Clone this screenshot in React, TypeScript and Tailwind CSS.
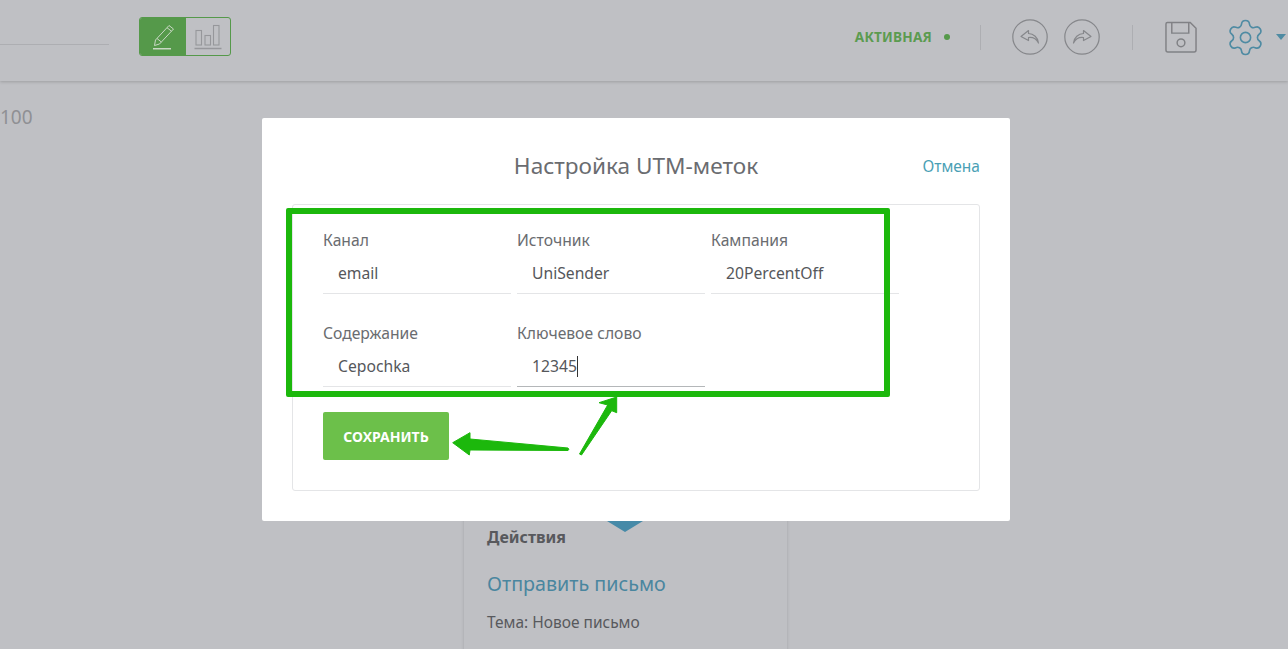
import { Settings } from 'lucide-react';

const fields = [
  { label: 'Канал', value: 'email' },
  { label: 'Источник', value: 'UniSender' },
  { label: 'Кампания', value: '20PercentOff' },
  { label: 'Содержание', value: 'Cepochka' },
  { label: 'Ключевое слово', value: '12345', active: true },
];

const Header = () => (
  <header className="h-[81px] flex items-center bg-[#bfc0c4] shadow-[0_1px_3px_rgba(0,0,0,0.18)] relative">
    <div className="w-[109px] h-[46px] border-b border-[#adaeb2] mt-[-1px] self-start" />
    <div className="ml-[30px] w-[92px] h-[39px] mt-[-8px] flex rounded-[3px] border border-[#55994a] overflow-hidden">
      <div className="w-[46px] bg-[#55994a] flex items-center justify-center">
        <svg width="22" height="26" viewBox="0 0 22 26" fill="none" stroke="#c9d8c4" strokeWidth="1">
          <path d="M3.5 16 L17 1.5 L21.5 5 L7.5 20 L2.5 21.5 Z" />
          <path d="M15 3.7 L19.5 7.2" />
          <path d="M5 14.5 L9.3 18" />
          <path d="M1 24.7 H19" strokeWidth="1.5" />
        </svg>
      </div>
      <div className="flex-1 flex items-center justify-center">
        <svg width="28" height="26" viewBox="0 0 28 26" fill="none" stroke="#96979b" strokeWidth="1.1">
          <rect x="2" y="6.5" width="5.5" height="14.5" />
          <rect x="11" y="11.5" width="5.5" height="9.5" />
          <rect x="19.5" y="1.5" width="5.5" height="19.5" />
          <path d="M0.5 24.5 H27.5" strokeWidth="1.5" />
        </svg>
      </div>
    </div>
    <div className="ml-auto mb-[7px] flex items-center">
      <span className="text-[13.6px] font-bold text-[#5b9b50] tracking-[0.2px]">АКТИВНАЯ</span>
      <span className="ml-[12px] w-[6px] h-[6px] rounded-full bg-[#55994a]" />
      <span className="ml-[30px] w-px h-[25px] bg-[#adaeb2]" />
      <svg className="ml-[31px]" width="36" height="36" viewBox="0 0 36 36" fill="none" stroke="#86878b" strokeWidth="1.2">
        <circle cx="18" cy="18" r="17.2" />
        <path d="M16.5 11.5 L9 17.5 L16.5 21.5 V18.5 C20.5 18 24.5 20 26.5 24 C26 18.5 21.5 14.5 16.5 14.5 Z" strokeLinejoin="round" />
      </svg>
      <svg className="ml-[16px]" width="36" height="36" viewBox="0 0 36 36" fill="none" stroke="#86878b" strokeWidth="1.2">
        <circle cx="18" cy="18" r="17.2" />
        <path d="M19.5 11.5 L27 17.5 L19.5 21.5 V18.5 C15.5 18 11.5 20 9.5 24 C10 18.5 14.5 14.5 19.5 14.5 Z" strokeLinejoin="round" />
      </svg>
      <span className="ml-[32px] w-px h-[25px] bg-[#adaeb2]" />
      <svg className="ml-[32px]" width="32" height="33" viewBox="0 0 33 33" fill="none" stroke="#808185" strokeWidth="1.5">
        <path d="M2.5 1 H26 L32 7 V29.5 Q32 31.5 30 31.5 H3 Q1 31.5 1 29.5 V2.5 Q1 1 2.5 1 Z" />
        <path d="M7 1 V12 H24.5 V1" />
        <circle cx="16.5" cy="22" r="4" />
      </svg>
      <Settings className="ml-[28px]" size={41} color="#4f8ba3" strokeWidth={0.95} />
      <span className="ml-[10px] mr-[2px] w-0 h-0 border-x-[5px] border-x-transparent border-t-[6px] border-t-[#4f8ba3]" />
    </div>
  </header>
);

const Modal = () => (
  <div className="absolute left-[262px] top-[118px] w-[748px] h-[403px] bg-white rounded-[2px] px-[30px]">
    <div className="relative h-[86px] flex items-start justify-center pt-[30px]">
      <h2 className="text-[22.6px] leading-[36px] text-[#6a6c70]">Настройка UTM-меток</h2>
      <a className="absolute right-0 top-[36px] text-[15.5px] leading-[24px] text-[#4a9fb5]">Отмена</a>
    </div>
    <div className="h-[287px] border border-[#e4e5e7] rounded-[3px] pl-[30px] pt-[23px]">
      <div className="grid grid-cols-[188px_188px_188px] gap-x-[6px] gap-y-[27px]">
        {fields.map((f) => (
          <div key={f.label}>
            <div className="text-[15.7px] leading-[24px] text-[#6a6c70]">{f.label}</div>
            <div className={`h-[42px] pl-[15px] pt-[2px] flex items-center text-[15.7px] text-[#55575b] border-b ${f.active ? 'border-[#b4b7b9]' : 'border-[#e4e5e7]'}`}>
              {f.value}
              {f.active && <span className="w-px h-[21px] bg-[#333]" />}
            </div>
          </div>
        ))}
      </div>
      <button className="mt-[25px] w-[126px] h-[48px] rounded-[2px] bg-[#6cc04a] text-white text-[14px] font-bold">
        СОХРАНИТЬ
      </button>
    </div>
  </div>
);

const App = () => {
  return (
    <div
      className="relative w-[1288px] h-[649px] overflow-hidden bg-[#bfc0c4]"
      style={{ fontFamily: '"Noto Sans", "Open Sans", sans-serif' }}
    >
      <Header />
      <div className="absolute left-0 top-[104px] text-[19px] leading-[26px] text-[#8f9094]">100</div>

      {/* Action node behind the dialog */}
      <div className="absolute left-[464px] top-[500px] w-[323px] h-[170px] bg-[#bfc0c4] shadow-[0_0_3px_rgba(0,0,0,0.15)] pl-[23px] pt-[26px]">
        <div className="text-[16px] leading-[22px] font-bold text-[#58595d]">Действия</div>
        <div className="mt-[21px] text-[19.7px] leading-[30px] text-[#4a869f]">Отправить письмо</div>
        <div className="mt-[11px] text-[15.5px] leading-[24px] text-[#58595d]">Тема: Новое письмо</div>
      </div>
      <div className="absolute left-[607px] top-[521px] w-0 h-0 border-x-[18px] border-x-transparent border-t-[11px] border-t-[#468aa8]" />

      <Modal />

      {/* Annotation drawn over the screenshot */}
      <div className="absolute left-[286px] top-[208px] w-[604px] h-[189px] border-[6px] border-[#1cb80c] rounded-[2px]" />
      <svg className="absolute left-[445px] top-[390px]" width="180" height="75" viewBox="0 0 180 75" fill="#1cb80c">
        <path d="M7.7 52.7 L25 42.7 L25 49 L123 58 Q124.5 59.5 123 60.5 L25 60 L24.3 65 Z" stroke="#1cb80c" strokeLinejoin="round" />
        <path d="M134.5 64 L162.7 15 L154 12.7 L171.7 7 L171.7 22.7 L166.7 20.7 L136.5 65 Z" stroke="#1cb80c" strokeLinejoin="round" />
      </svg>
    </div>
  );
};

export default App;
